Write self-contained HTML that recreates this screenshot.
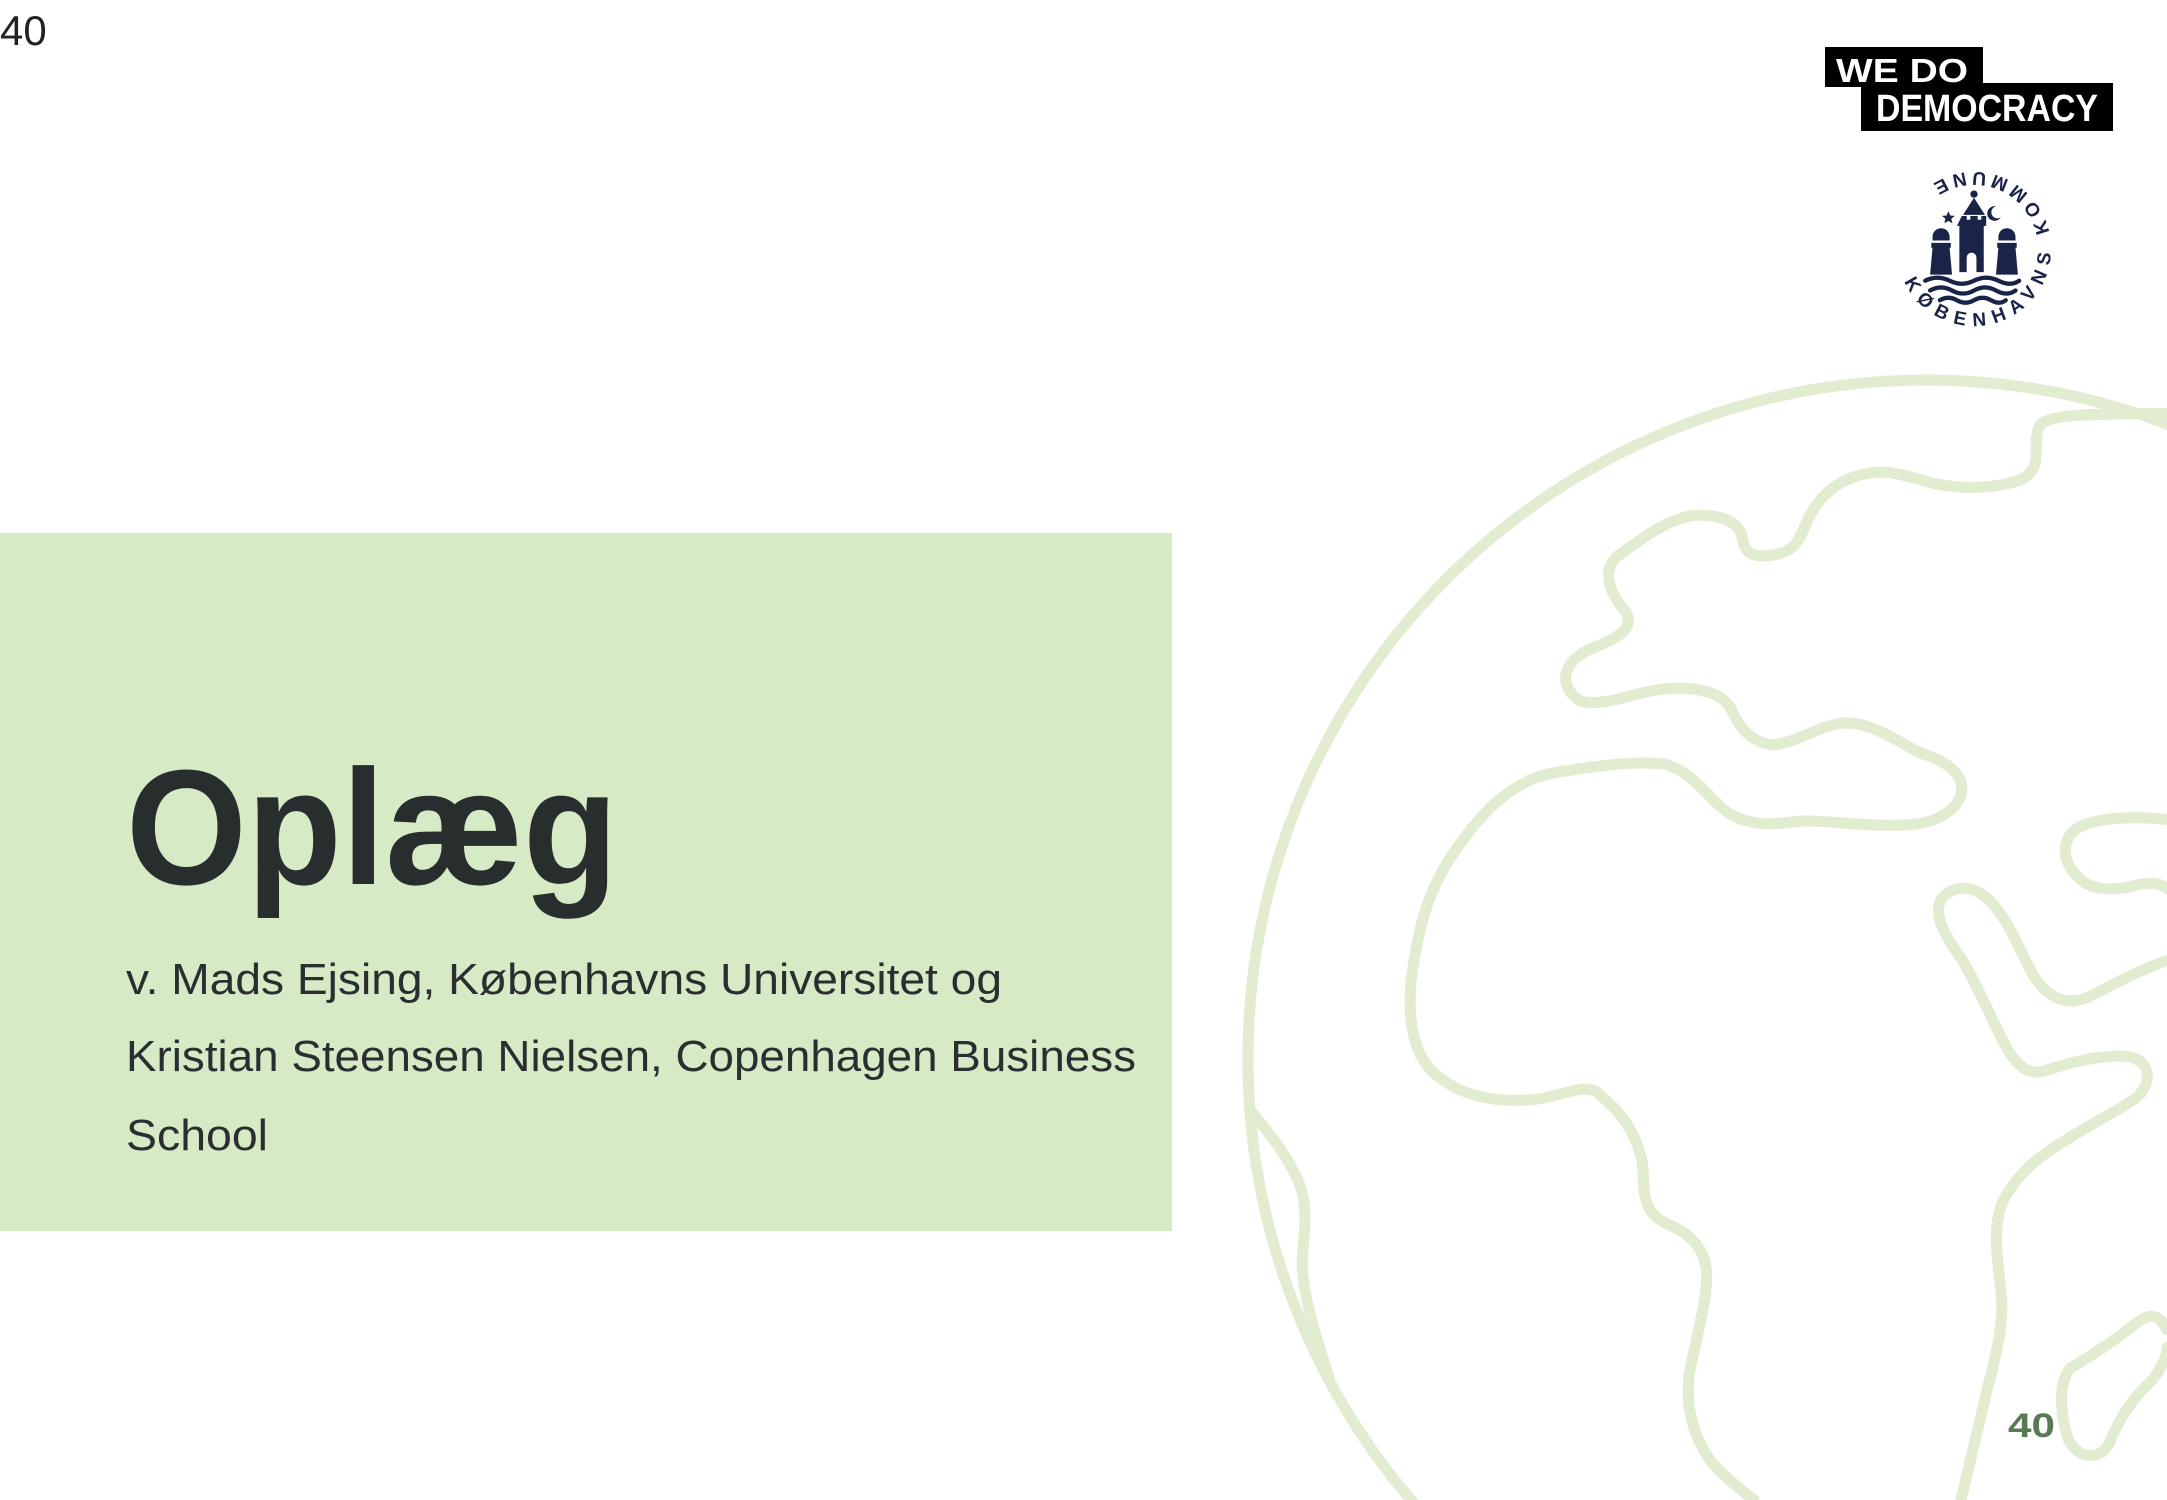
<!DOCTYPE html>
<html><head><meta charset="utf-8"><style>
html,body{margin:0;padding:0;background:#fff;width:2167px;height:1500px;overflow:hidden}
svg{display:block;position:absolute;left:0;top:0}
</style></head><body>
<svg width="2167" height="1500" viewBox="0 0 2167 1500" xmlns="http://www.w3.org/2000/svg">
<rect width="2167" height="1500" fill="#fff"/>
<g transform="scale(1.382)" fill="none" stroke="#e2ecd0" stroke-width="8" stroke-linecap="round" stroke-linejoin="round">
<circle cx="1394" cy="766" r="491"/>
<path d="M1568,299 C1520,300 1478,298 1475,310 C1470,325 1480,340 1460,348 C1440,354 1420,354 1400,350 C1380,345 1365,338 1345,344 C1325,350 1315,362 1308,376 C1302,390 1300,400 1280,402 C1262,404 1262,395 1260,386 C1255,375 1240,372 1225,373 C1205,376 1185,392 1171,402 C1158,412 1165,430 1176,442 C1184,455 1170,462 1150,470 C1132,478 1126,495 1143,507 C1160,512 1180,502 1200,499 C1225,496 1245,500 1252,512 C1258,525 1265,536 1282,539 C1300,538 1315,525 1335,523 C1355,523 1370,535 1390,545 C1412,552 1422,562 1419,575 C1414,590 1395,597 1376,597 C1350,598 1325,594 1304,594 C1285,596 1270,599 1252,589 C1235,578 1228,560 1205,553 C1180,550 1150,555 1120,560 C1090,568 1070,590 1050,620 C1030,650 1025,681 1021,710 C1018,745 1025,770 1045,782 C1065,796 1090,798 1115,795 C1135,791 1145,785 1155,790 C1170,802 1182,815 1188,839 C1191,855 1185,875 1205,885 C1225,893 1235,905 1235,925 C1234,945 1228,965 1222,996 C1220,1020 1225,1040 1240,1060 C1252,1072 1262,1080 1269,1085"/>
<path d="M1419,1085 C1425,1060 1432,1030 1438,1005 C1446,975 1450,955 1448,935 C1445,910 1442,890 1448,872 C1456,855 1470,840 1490,828 C1510,815 1530,805 1545,795 C1556,786 1558,770 1543,765 C1525,762 1500,768 1479,775 C1468,778 1460,772 1452,758 C1442,740 1432,715 1420,695 C1408,678 1398,662 1405,650 C1414,640 1428,640 1440,652 C1455,668 1462,690 1472,707 C1482,722 1495,728 1510,722 C1530,712 1548,702 1568,695"/>
<path d="M1568,593 C1540,590 1515,592 1502,600 C1490,610 1493,625 1505,636 C1515,645 1530,645 1548,640 C1558,638 1565,640 1568,643"/>
<path d="M1568,962 C1562,950 1555,950 1545,958 C1530,970 1515,980 1498,990 C1490,1000 1490,1020 1496,1040 C1502,1055 1518,1058 1526,1045 C1532,1030 1540,1015 1556,1000 C1565,990 1568,980 1568,975"/>
<path d="M906,805 C920,822 935,840 942,862 C948,885 940,905 943,925 C946,950 955,975 962,998"/>
</g>
<rect x="0" y="533" width="1172" height="698" fill="#d7eac6"/>
<text x="126" y="884" font-family="Liberation Sans, sans-serif" font-weight="bold" font-size="164" fill="#282d2e" textLength="492" lengthAdjust="spacingAndGlyphs">Oplæg</text>
<g font-family="Liberation Sans, sans-serif" font-size="44" fill="#2a2e30">
<text x="126" y="994" textLength="876" lengthAdjust="spacingAndGlyphs">v. Mads Ejsing, Københavns Universitet og</text>
<text x="126" y="1071" textLength="1010" lengthAdjust="spacingAndGlyphs">Kristian Steensen Nielsen, Copenhagen Business</text>
<text x="126" y="1150" textLength="142" lengthAdjust="spacingAndGlyphs">School</text>
</g>
<text x="0" y="45" font-family="Liberation Sans, sans-serif" font-size="42" fill="#222">40</text>
<text x="2008" y="1437" font-family="Liberation Sans, sans-serif" font-weight="bold" font-size="34" fill="#587a52" textLength="47" lengthAdjust="spacingAndGlyphs">40</text>
<rect x="1825" y="47" width="158" height="40" fill="#000"/>
<rect x="1861" y="83" width="252" height="48" fill="#000"/>
<text x="1836" y="82" font-family="Liberation Sans, sans-serif" font-weight="bold" font-size="33" fill="#fff" textLength="132" lengthAdjust="spacingAndGlyphs">WE  DO</text>
<text x="1876" y="121" font-family="Liberation Sans, sans-serif" font-weight="bold" font-size="38" fill="#fff" textLength="222" lengthAdjust="spacingAndGlyphs">DEMOCRACY</text>
<g transform="translate(1974,249)" fill="#1a2348">
<defs><path id="kk" d="M-69.8,32.5 A77,77 0 1 0 -43,-63.8"/></defs>
<text font-family="Liberation Sans, sans-serif" font-weight="bold" font-size="19"><textPath href="#kk" textLength="372" lengthAdjust="spacing">KØBENHAVNS KOMMUNE</textPath></text>
<g transform="scale(1.22)">
<circle cx="0" cy="-45" r="3"/>
<path d="M0,-42 L-9,-28 L9,-28 Z"/>
<path d="M-10,-27 h4 v3 h3 v-3 h6 v3 h3 v-3 h4 v8 h-2 v38 h-6 v-12 a2,2 0 0 0 -8 0 v12 h-6 v-38 h-2 Z"/>
<path d="M-34,-10 a7,7 0 0 1 14,0 v3 h-14 Z"/>
<path d="M-35,-5 h16 v4 h-1 l2,22 h-18 l2,-22 h-1 Z"/>
<path d="M20,-10 a7,7 0 0 1 14,0 v3 h-14 Z"/>
<path d="M19,-5 h16 v4 h-1 l2,22 h-18 l2,-22 h-1 Z"/>
<path d="M-21,-31 l1.5,3.5 3.8,0.3 -2.9,2.4 0.9,3.7 -3.3,-2 -3.3,2 0.9,-3.7 -2.9,-2.4 3.8,-0.3 Z"/>
<path d="M18,-35 a6,6 0 1 0 4,9 a5,5 0 1 1 -4,-9 Z"/>
<g fill="none" stroke="#1a2348" stroke-width="3.5" stroke-linecap="round">
<path d="M-40,26 q10,-5 20,0 t20,0 t20,0 t17,0"/>
<path d="M-36,34 q9,-5 18,0 t18,0 t18,0 t16,0"/>
<path d="M-28,42 q7,-4 14,0 t14,0 t14,0 t12,0"/>
</g>
</g>
</g>
</svg>
</body></html>
